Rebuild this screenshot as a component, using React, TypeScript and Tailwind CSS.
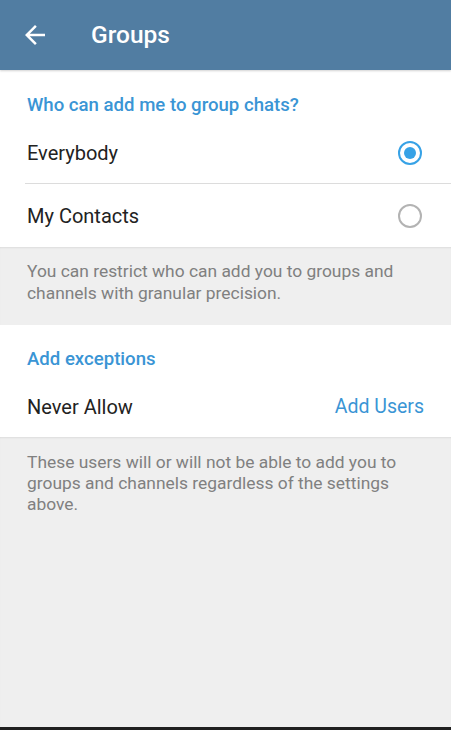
export default function App() {
  return (
    <div className="min-h-[730px] flex flex-col bg-[#efefef] font-['Roboto',sans-serif]">
      <header className="h-[70px] bg-[#517da2] flex items-center shrink-0 relative z-10 shadow-[0_1px_2px_rgba(0,0,0,0.18)]">
        <svg viewBox="0 0 24 24" className="w-[30px] h-[30px] ml-[20px] fill-white">
          <path d="M20 11H7.83l5.59-5.59L12 4l-8 8 8 8 1.41-1.41L7.83 13H20v-2z" />
        </svg>
        <h1 className="ml-[41px] text-[24.5px] font-medium text-white leading-none">Groups</h1>
      </header>

      <section className="bg-white">
        <div className="pl-[27px] pt-[23px] pb-[5px] leading-[24px] text-[18.6px] font-medium text-[#3a95d5]">
          Who can add me to group chats?
        </div>
        <RadioRow label="Everybody" checked className="h-[61px]" />
        <div className="ml-[25px] h-px bg-[#dcdcdc]" />
        <RadioRow label="My Contacts" className="h-[63px]" />
      </section>

      <div className="pl-[27px] pr-[20px] pt-[13px] pb-[21px] text-[17.4px] leading-[22px] text-[#808080] shadow-[inset_0_2px_2px_-1px_rgba(0,0,0,0.08)]">
        You can restrict who can add you to groups and channels with granular precision.
      </div>

      <section className="bg-white">
        <div className="pl-[27px] pt-[22px] pb-[6px] leading-[24px] text-[18.6px] font-medium text-[#3a95d5]">
          Add exceptions
        </div>
        <div className="h-[60px] flex items-center justify-between pl-[27px] pr-[27px]">
          <span className="text-[20px] text-[#222]">Never Allow</span>
          <span className="text-[19.5px] text-[#3a95d5]">Add Users</span>
        </div>
      </section>

      <div className="flex-1 pl-[27px] pr-[20px] pt-[15px] text-[17.4px] leading-[21px] text-[#808080] shadow-[inset_0_2px_2px_-1px_rgba(0,0,0,0.08)]">
        These users will or will not be able to add you to groups and channels regardless of the settings above.
      </div>
      <div className="h-[3px] bg-[#202020] shrink-0" />
    </div>
  );
}

function RadioRow({ label, checked, className }: { label: string; checked?: boolean; className?: string }) {
  return (
    <div className={`flex items-center justify-between pl-[27px] pr-[29px] ${className ?? ""}`}>
      <span className="text-[20px] text-[#222]">{label}</span>
      <span
        className={`w-[24px] h-[24px] rounded-full border-2 flex items-center justify-center ${
          checked ? "border-[#37a2e6]" : "border-[#b3b3b3]"
        }`}
      >
        {checked && <span className="w-[12px] h-[12px] rounded-full bg-[#37a2e6]" />}
      </span>
    </div>
  );
}
